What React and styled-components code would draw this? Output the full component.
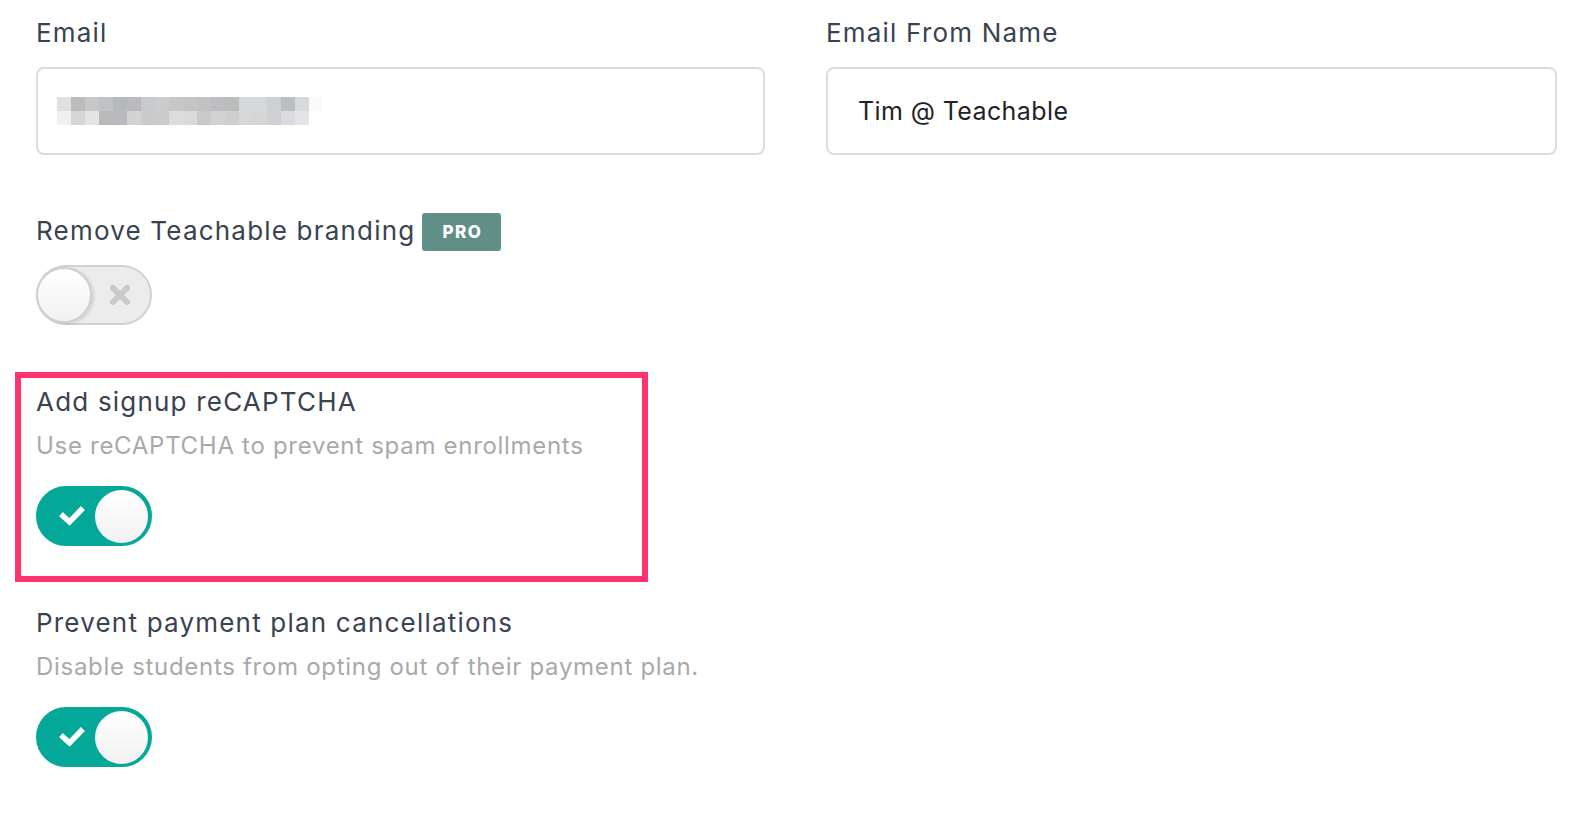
import styled, { createGlobalStyle } from "styled-components";

const GlobalStyle = createGlobalStyle`
    body{
        margin: 0;
        background: #ffffff;
        font-family: Inter, "Open Sans", sans-serif;
    }
    *{
        box-sizing: border-box;
    }
`

const blurRows = [
    ['#e0e0e0','#bbbcbd','#c5c7c8','#bfc3c5','#b6b8bb','#b9bbbe','#c8c9cb','#cbcccd','#c6c7c9','#c3c4c6','#c1c2c4','#bdbebf','#bbbdbc','#d5d8d9','#d6d7d9','#cfd0d2','#bbbfc1','#d8d9db','#fafafa'],
    ['#f0f0f0','#d5d4d7','#e3e3e3','#b8b9bb','#b9babe','#d3d3d5','#c9cacc','#cacbcd','#dcdcdd','#dadadb','#c8c9cb','#d2d2d4','#cdcfce','#d6d7d9','#d4d5d7','#cfd0d2','#dbdbdf','#e4e4e6'],
]

function BlurredEmail(){
    return (
        <svg width="270" height="28" viewBox="0 0 270 28">
            {blurRows.map((row, r) =>
                row.map((c, i) => (
                    <rect key={r + '-' + i} x={i * 14} y={r * 14} width="14" height="14" fill={c} />
                ))
            )}
        </svg>
    )
}

function Toggle({ on }){
    return (
        <Track on={on ? 1 : 0}>
            {on ?
                <svg width="26" height="20" viewBox="0 0 26 20">
                    <polyline points="4,10 10.5,16 22,4" fill="none" stroke="#ffffff" strokeWidth="5.5" strokeLinecap="square" />
                </svg>
            : null}
            <Knob on={on ? 1 : 0} />
            {!on ?
                <svg width="22" height="22" viewBox="0 0 22 22">
                    <path d="M4 4 L18 18 M18 4 L4 18" stroke="#c9c9c9" strokeWidth="6" strokeLinecap="round" />
                </svg>
            : null}
        </Track>
    )
}

export default function App(){
    return <>
        <GlobalStyle />
        <Page>
            <Columns>
                <Field>
                    <Label>Email</Label>
                    <Input>
                        <BlurredEmail />
                    </Input>
                </Field>
                <Field>
                    <Label>Email From Name</Label>
                    <Input wide>Tim @ Teachable</Input>
                </Field>
            </Columns>
            <Sections>
                <Section>
                    <LabelRow>
                        <Label>Remove Teachable branding</Label>
                        <Badge>PRO</Badge>
                    </LabelRow>
                    <Toggle on={false} />
                </Section>
                <Section highlighted>
                    <Label>Add signup reCAPTCHA</Label>
                    <Description>Use reCAPTCHA to prevent spam enrollments</Description>
                    <Toggle on={true} />
                </Section>
                <Section>
                    <Label>Prevent payment plan cancellations</Label>
                    <Description>Disable students from opting out of their payment plan.</Description>
                    <Toggle on={true} />
                </Section>
            </Sections>
        </Page>
    </>
}

const Page = styled.div`
    padding: 17px 37px 40px 36px;
    width: 1594px;
`

const Columns = styled.div`
    display: grid;
    grid-template-columns: 729px 731px;
    column-gap: 61px;
`

const Field = styled.div`
    display: flex;
    flex-direction: column;
`

const Label = styled.div`
    font-size: 26px;
    line-height: 32px;
    color: #394350;
    font-weight: 400;
    letter-spacing: 1.2px;
    white-space: nowrap;
`

const Input = styled.div`
    margin-top: 18px;
    height: 88px;
    border: 2px solid #dcdcdc;
    border-radius: 8px;
    display: flex;
    align-items: center;
    padding-left: ${p => p.wide ? '30px' : '19px'};
    font-size: 25px;
    letter-spacing: 0.4px;
    color: #1f2328;
`

const Sections = styled.div`
    margin-top: 36px;
    display: flex;
    flex-direction: column;
    gap: 11px;
`

const Section = styled.div`
    display: flex;
    flex-direction: column;
    align-items: flex-start;
    align-self: flex-start;
    margin-left: -21px;
    width: ${p => p.highlighted ? '633px' : 'auto'};
    padding: 8px 15px 30px 15px;
    border: 6px solid ${p => p.highlighted ? '#fe3370' : 'transparent'};
`

const LabelRow = styled.div`
    display: flex;
    align-items: center;
    gap: 7px;
    margin-top: 5px;
    margin-bottom: 14px;
`

const Badge = styled.div`
    background: #5f8f87;
    color: #ffffff;
    font-weight: 800;
    font-size: 17px;
    letter-spacing: 1.5px;
    height: 38px;
    padding: 0 19px 0 20px;
    border-radius: 3px;
    display: flex;
    align-items: center;
    margin-top: 3px;
`

const Description = styled.div`
    margin-top: 13px;
    margin-bottom: 25px;
    font-size: 24px;
    line-height: 30px;
    letter-spacing: 0.7px;
    color: #a9a9a9;
    white-space: nowrap;
`

const Track = styled.div`
    width: 116px;
    height: 60px;
    border-radius: 30px;
    border: 2px solid ${p => p.on ? '#06a898' : '#d2d2d2'};
    background: ${p => p.on ? '#04a898' : '#ececec'};
    display: flex;
    align-items: center;
    justify-content: space-between;
    padding: ${p => p.on ? '0 2px 0 21px' : '0 19px 0 0'};
`

const Knob = styled.div`
    width: ${p => p.on ? '53px' : '56px'};
    height: ${p => p.on ? '53px' : '56px'};
    border-radius: 50%;
    background: linear-gradient(#ffffff, #f1f1f1);
    border: ${p => p.on ? 'none' : '2px solid #cfcfcf'};
    box-shadow: ${p => p.on ? 'none' : '2px 1px 3px rgba(0,0,0,0.12)'};
    margin-left: ${p => p.on ? '0' : '-2px'};
`
